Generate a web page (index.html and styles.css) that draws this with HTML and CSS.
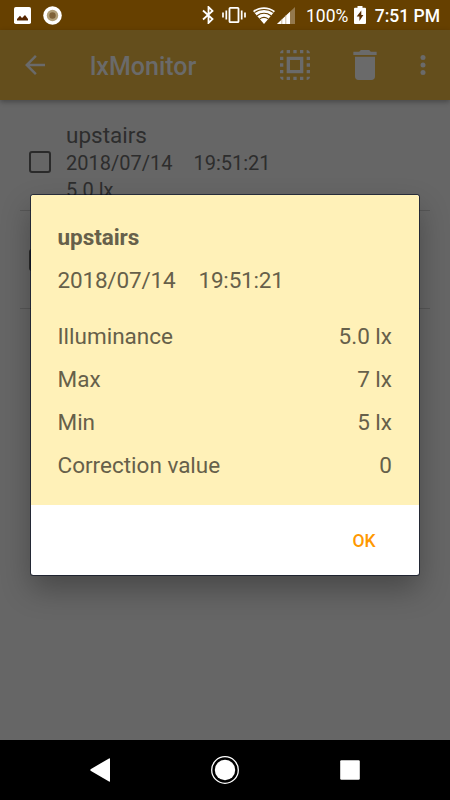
FILE: index.html
```html
<!DOCTYPE html>
<html lang="en">
  <head>
    <meta charset="UTF-8" />
    <meta name="viewport" content="width=device-width, initial-scale=1.0" />
    <title>lxMonitor</title>
    <link rel="stylesheet" href="styles.css">
  </head>
  <body>
    <div class="screen">
      <div class="status-bar">
        <svg class="photo" width="17" height="17" viewBox="0 0 17 17">
          <rect width="17" height="17" rx="1.8" fill="#fff" />
          <path d="M3 13.5V12l3-3.3 2 2.3L11 8l3 4v1.5z" fill="#562600" />
        </svg>
        <svg class="record" width="19" height="19" viewBox="0 0 19 19">
          <circle cx="9.5" cy="9.5" r="9.3" fill="#fff" />
          <circle cx="9.5" cy="9.5" r="5.7" fill="#b29f78" />
          <circle cx="9.5" cy="9.5" r="3.2" fill="#7f6238" />
        </svg>
        <svg class="bluetooth" width="12" height="18" viewBox="0 0 12 18">
          <path d="M1 4.5l9.5 8.6L6.5 17V1l4 3.9L1 13.5" fill="none" stroke="#fff" stroke-width="1.8" />
        </svg>
        <svg class="vibrate" width="24" height="18" viewBox="0 0 24 18">
          <rect x="7.5" y="1.8" width="9" height="14.4" rx=".8" fill="none" stroke="#fff" stroke-width="1.8" />
          <path d="M1 6.5v5M4.3 4.5v9M19.7 4.5v9M23 6.5v5" stroke="#fff" stroke-width="1.7" />
        </svg>
        <svg class="wifi" width="22" height="17" viewBox="0 0 22 17">
          <path d="M0 4C6.5-1.1 15.5-1.1 22 4L11 17z" fill="#fff" />
          <path d="M1.5 5.6c5.7-4.2 13.3-4.2 19 0M4 8.7c4.2-3.1 9.8-3.1 14 0M6.7 11.9c2.6-1.9 6-1.9 8.6 0" fill="none" stroke="#664000" stroke-width="1.1" />
        </svg>
        <svg class="signal" width="18" height="17" viewBox="0 0 18 17">
          <path d="M0 17L18 0v17z" fill="#94794d" />
          <path d="M0 17L13 4.7V17z" fill="#fff" />
          <path d="M4.8 12v5M8.8 8v9" stroke="#b39b72" stroke-width=".7" />
        </svg>
        <span class="percent">100%</span>
        <svg class="battery" width="12" height="18" viewBox="0 0 12 18">
          <path d="M3.5 0h5v1.7H11a1 1 0 0 1 1 1V17a1 1 0 0 1-1 1H1a1 1 0 0 1-1-1V2.7a1 1 0 0 1 1-1h2.5z" fill="#fff" />
          <path d="M7.3 4.5L2.7 10.5h2.7V15l4-6H7.3z" fill="#562b00" />
        </svg>
        <span class="clock">7:51 PM</span>
      </div>

      <div class="app-bar">
        <svg class="back" width="30" height="30" viewBox="0 0 24 24">
          <path d="M20 11H7.83l5.59-5.59L12 4l-8 8 8 8 1.41-1.41L7.83 13H20v-2z" />
        </svg>
        <h1 class="title">lxMonitor</h1>
        <svg class="select-all" width="40" height="40" viewBox="0 0 24 24">
          <path d="M3 5h2V3c-1.1 0-2 .9-2 2zm0 8h2v-2H3v2zm4 8h2v-2H7v2zM3 9h2V7H3v2zm10-6h-2v2h2V3zm6 0v2h2c0-1.1-.9-2-2-2zM5 21v-2H3c0 1.1.9 2 2 2zm-2-4h2v-2H3v2zM9 3H7v2h2V3zm2 18h2v-2h-2v2zm8-8h2v-2h-2v2zm0 8c1.1 0 2-.9 2-2h-2v2zm0-12h2V7h-2v2zm0 8h2v-2h-2v2zm-4 4h2v-2h-2v2zm0-16h2V3h-2v2zM7 17h10V7H7v10zm2-8h6v6H9V9z" />
        </svg>
        <svg class="delete" width="40" height="40" viewBox="0 0 24 24">
          <path d="M6 19c0 1.1.9 2 2 2h8c1.1 0 2-.9 2-2V7H6v12zM19 4h-3.5l-1-1h-5l-1 1H5v2h14V4z" />
        </svg>
        <svg class="more" width="30" height="30" viewBox="0 0 24 24">
          <circle cx="12" cy="6" r="2" />
          <circle cx="12" cy="12" r="2" />
          <circle cx="12" cy="18" r="2" />
        </svg>
      </div>

      <div class="list">
        <div class="item">
          <span class="checkbox"></span>
          <div class="item-text">
            <div class="item-name">upstairs</div>
            <div class="item-line"><span>2018/07/14</span><span>19:51:21</span></div>
            <div class="item-line">5.0 lx</div>
          </div>
        </div>
        <div class="item">
          <span class="checkbox"></span>
        </div>
      </div>

      <div class="nav-bar">
        <svg width="30" height="30" viewBox="0 0 30 30">
          <path d="M25 4v22q0 1-1 .4L6 16q-1.500-1 0-2L24 3.400q1-.4 1 .6z" fill="#fff" />
        </svg>
        <svg width="30" height="30" viewBox="0 0 30 30">
          <circle cx="15" cy="15" r="13.3" fill="none" stroke="#fff" stroke-width="1.3" />
          <circle cx="15" cy="15" r="10.2" fill="#fff" />
        </svg>
        <svg width="30" height="30" viewBox="0 0 30 30">
          <rect x="5.2" y="5.2" width="19.6" height="19.6" rx="1.2" fill="#fff" />
        </svg>
      </div>

      <div class="dialog">
        <div class="dialog-body">
          <div class="dialog-name">upstairs</div>
          <div class="dialog-date"><span>2018/07/14</span><span>19:51:21</span></div>
          <div class="row"><span>Illuminance</span><span>5.0 lx</span></div>
          <div class="row"><span>Max</span><span>7 lx</span></div>
          <div class="row"><span>Min</span><span>5 lx</span></div>
          <div class="row"><span>Correction value</span><span>0</span></div>
        </div>
        <div class="dialog-actions">
          <button class="ok">OK</button>
        </div>
      </div>
    </div>
  </body>
</html>
```
FILE: styles.css
```css
body {
  margin: 0;
  font-family: Roboto, sans-serif;
}
svg {
  display: block;
  flex: none;
}
.screen {
  position: relative;
  display: flex;
  flex-direction: column;
  width: 450px;
  height: 800px;
  overflow: hidden;
  background-color: #666;
}

/* status bar */
.status-bar {
  display: flex;
  align-items: center;
  box-sizing: border-box;
  height: 30px;
  padding: 0 10px 0 14px;
  background-color: #664000;
  color: #fff;
  font-size: 17.5px;
  font-weight: 500;
  line-height: 30px;
  white-space: nowrap;
}
.record {
  margin-left: 12px;
}
.bluetooth {
  margin-left: 140px;
}
.vibrate {
  margin-left: 8px;
}
.wifi {
  margin-left: 7px;
}
.signal {
  margin-left: 2px;
}
.percent {
  width: 42px;
  margin-left: 11px;
  font-weight: 400;
}
.battery {
  margin-left: 5.5px;
}
.clock {
  margin-left: auto;
}
.status-bar span {
  padding-top: 2px;
}

/* app bar */
.app-bar {
  display: flex;
  align-items: center;
  box-sizing: border-box;
  height: 70px;
  flex: none;
  padding: 0 12.5px 0 20px;
  background-color: #644e1c;
  box-shadow: 0 2px 5px rgba(0, 0, 0, 0.3);
  fill: #6a6a6a;
}
.title {
  margin: 2px 0 0 40px;
  color: #6a6a6a;
  font-size: 25px;
  font-weight: 500;
}
.select-all {
  margin-left: auto;
}
.delete {
  margin-left: 30px;
}
.more {
  margin-left: 22.5px;
}

/* records */
.list {
  flex: 1;
  padding: 13px 20px 0;
  color: #2d2d2d;
}
.item {
  display: flex;
  align-items: center;
  box-sizing: border-box;
  height: 98px;
  padding-left: 9px;
  border-bottom: 1px solid #575757;
}
.checkbox {
  box-sizing: border-box;
  width: 22px;
  height: 22px;
  border: 2px solid #2a2a2a;
  border-radius: 3px;
}
.item-text {
  margin-left: 15px;
  padding-top: 2px;
}
.item-name {
  font-size: 22.5px;
  line-height: 29px;
}
.item-line {
  display: flex;
  gap: 21px;
  font-size: 20px;
  line-height: 27px;
}

/* navigation bar */
.nav-bar {
  display: flex;
  align-items: center;
  justify-content: space-between;
  box-sizing: border-box;
  height: 60px;
  padding: 0 85px;
  background-color: #000;
}

/* dialog */
.dialog {
  position: absolute;
  top: 195px;
  left: 31px;
  width: 387.5px;
  height: 380px;
  overflow: hidden;
  border-radius: 2.5px;
  background-color: #fff;
  box-shadow: 0 0 0 1px rgba(0, 8, 30, 0.6), 0 14px 30px rgba(0, 0, 0, 0.3);
}
.dialog-body {
  box-sizing: border-box;
  height: 310px;
  padding: 21px 26.5px 0 26.5px;
  background-color: #fff1b8;
  color: #66604a;
  font-size: 22.5px;
  line-height: 43px;
}
.dialog-name {
  font-weight: bold;
  letter-spacing: -0.05px;
}
.dialog-date {
  display: flex;
  gap: 23px;
  margin-bottom: 13px;
  letter-spacing: -0.18px;
}
.row {
  display: flex;
  justify-content: space-between;
}
.dialog-actions {
  display: flex;
  align-items: center;
  justify-content: flex-end;
  height: 70px;
  padding-right: 43px;
}
.ok {
  padding: 2px 0 0;
  border: none;
  background: none;
  color: #ff9800;
  font-family: inherit;
  font-size: 17.5px;
  font-weight: 500;
}
```
